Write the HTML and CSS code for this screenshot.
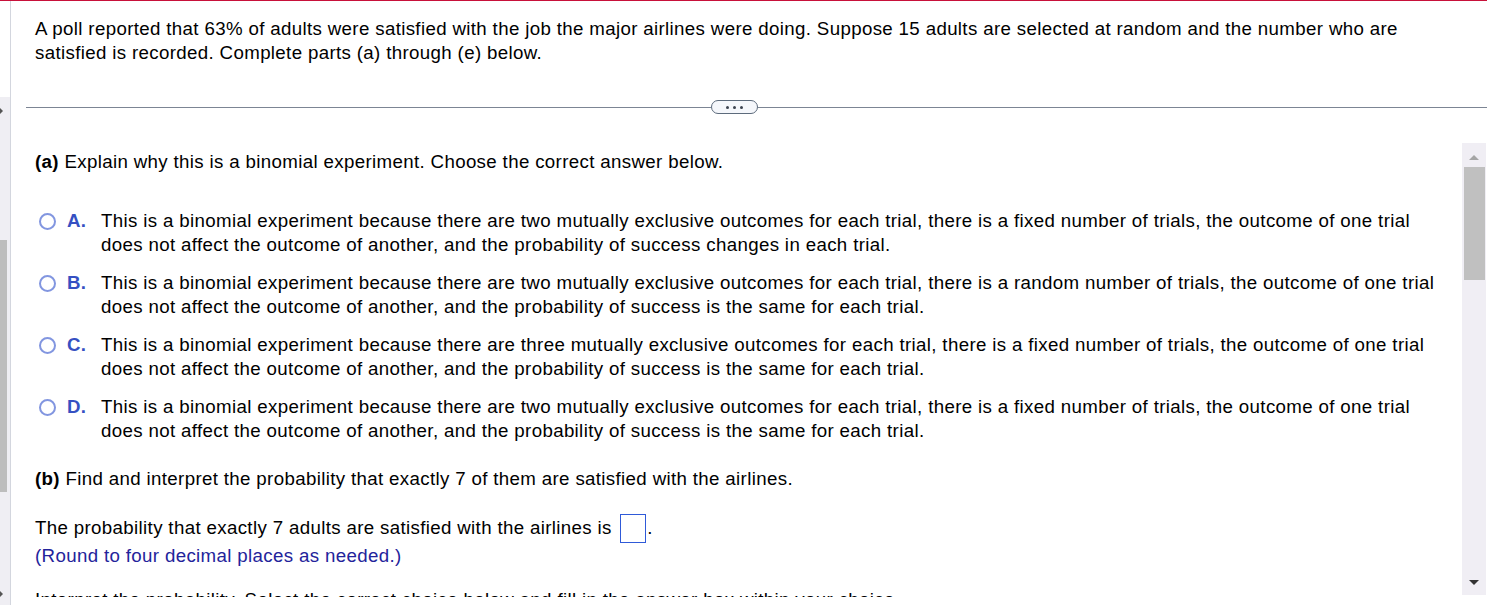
FILE: index.html
```html
<!DOCTYPE html>
<html>
<head>
<meta charset="utf-8">
<link rel="stylesheet" href="styles.css">
</head>
<body>
<div class="redline"></div>
<div class="page">
  <div class="leftbar">
    <div class="lb-top"></div>
    <div class="lb-track">
      <span class="lb-arrow"></span>
      <div class="lb-gap1"></div>
      <div class="lb-thumb"></div>
      <div class="lb-gap2"></div>
      <span class="lb-arrow lb-down"></span>
    </div>
  </div>
  <div class="main">
    <p class="stem">A poll reported that 63% of adults were satisfied with the job the major airlines were doing. Suppose 15 adults are selected at random and the number who are satisfied is recorded. Complete parts (a) through (e) below.</p>
    <div class="divider">
      <span class="line-left"></span>
      <span class="more"><i></i><i></i><i></i></span>
      <span class="line-right"></span>
    </div>
    <div class="pane">
      <div class="content">
        <p class="part"><b>(a)</b> Explain why this is a binomial experiment. Choose the correct answer below.</p>
        <div class="options">
          <div class="option"><span class="radio"></span><span class="letter">A.</span><span class="otext">This is a binomial experiment because there are two mutually exclusive outcomes for each trial, there is a fixed number of trials, the outcome of one trial does not affect the outcome of another, and the probability of success changes in each trial.</span></div>
          <div class="option"><span class="radio"></span><span class="letter">B.</span><span class="otext">This is a binomial experiment because there are two mutually exclusive outcomes for each trial, there is a random number of trials, the outcome of one trial does not affect the outcome of another, and the probability of success is the same for each trial.</span></div>
          <div class="option"><span class="radio"></span><span class="letter">C.</span><span class="otext">This is a binomial experiment because there are three mutually exclusive outcomes for each trial, there is a fixed number of trials, the outcome of one trial does not affect the outcome of another, and the probability of success is the same for each trial.</span></div>
          <div class="option"><span class="radio"></span><span class="letter">D.</span><span class="otext">This is a binomial experiment because there are two mutually exclusive outcomes for each trial, there is a fixed number of trials, the outcome of one trial does not affect the outcome of another, and the probability of success is the same for each trial.</span></div>
        </div>
        <p class="part partb"><b>(b)</b> Find and interpret the probability that exactly 7 of them are satisfied with the airlines.</p>
        <p class="answer">The probability that exactly 7 adults are satisfied with the airlines is <span class="box"></span>.</p>
        <p class="hint">(Round to four decimal places as needed.)</p>
        <p class="interp">Interpret the probability. Select the correct choice below and fill in the answer box within your choice.</p>
      </div>
      <div class="vscroll">
        <span class="vs-up"></span>
        <div class="vs-thumb"></div>
        <div class="vs-fill"></div>
        <span class="vs-down"></span>
      </div>
    </div>
  </div>
</div>
</body>
</html>
```
FILE: styles.css
```css
html, body {
  margin: 0;
  padding: 0;
  background: #ffffff;
  overflow: hidden;
}
body {
  width: 1487px;
  height: 605px;
  font-family: "Liberation Sans", Arial, sans-serif;
  font-size: 18.7px;
  letter-spacing: 0.35px;
  line-height: 24px;
  color: #000000;
}
p {
  margin: 0;
}
.redline {
  height: 1px;
  background: #c8113a;
}
.page {
  display: flex;
  height: 604px;
}
.leftbar {
  width: 10px;
  border-right: 1px solid #d3d6de;
  display: flex;
  flex-direction: column;
}
.lb-top {
  height: 96px;
  background: #ffffff;
}
.lb-track {
  flex: 1;
  background: #efeef3;
  display: flex;
  flex-direction: column;
  align-items: flex-start;
}
.lb-arrow {
  width: 0;
  height: 0;
  margin: 11px 0 0 0;
  border-left: 3px solid #555555;
  border-top: 3px solid transparent;
  border-bottom: 3px solid transparent;
}
.lb-down {
  margin: 0 0 8px 0;
}
.lb-gap1 {
  height: 126px;
}
.lb-thumb {
  width: 7px;
  height: 252px;
  background: #bdbdbd;
}
.lb-gap2 {
  flex: 1;
}
.main {
  flex: 1;
  display: flex;
  flex-direction: column;
  min-width: 0;
}
.stem {
  padding: 16px 30px 0 24px;
}
.divider {
  display: flex;
  align-items: center;
  margin: 35px 0 0 15px;
  height: 14px;
}
.line-left {
  width: 685px;
  border-top: 1px solid #7c8594;
}
.line-right {
  flex: 1;
  border-top: 1px solid #7c8594;
}
.more {
  box-sizing: border-box;
  width: 47px;
  height: 14px;
  border: 1px solid #5d6b7c;
  border-radius: 7px;
  background: #f5f7fb;
  display: flex;
  justify-content: center;
  align-items: center;
  gap: 4px;
}
.more i {
  width: 3px;
  height: 3px;
  border-radius: 50%;
  background: #3c4450;
}
.pane {
  display: flex;
  margin-top: 29px;
  height: 454px;
  overflow: hidden;
}
.content {
  flex: 1;
  padding: 7px 6px 0 24px;
  min-width: 0;
}
.part b {
  font-weight: bold;
}
.options {
  margin-top: 35px;
}
.option {
  display: flex;
  align-items: flex-start;
  margin-bottom: 14px;
}
.radio {
  box-sizing: border-box;
  flex: none;
  width: 17px;
  height: 17px;
  margin: 4px 11px 0 4px;
  border: 2px solid #8296e0;
  border-radius: 50%;
  background: #ffffff;
}
.letter {
  flex: none;
  width: 34px;
  font-weight: bold;
  color: #3550c2;
}
.otext {
  flex: 1;
}
.partb {
  margin-top: 24px;
}
.answer {
  margin-top: 25px;
  height: 28px;
}
.box {
  display: inline-block;
  box-sizing: border-box;
  width: 26px;
  height: 29px;
  border: 1px solid #2f5ad8;
  vertical-align: middle;
  margin: -4px 1px -4px 3px;
  position: relative;
  top: -1px;
}
.hint {
  color: #23239b;
}
.interp {
  margin-top: 20px;
}
.vscroll {
  flex: none;
  width: 24px;
  margin-right: 1px;
  height: 452px;
  background: #f0eef4;
  display: flex;
  flex-direction: column;
  align-items: center;
}
.vs-up {
  width: 0;
  height: 0;
  margin: 12px 0 7px 0;
  border-bottom: 5px solid #a5a5a5;
  border-left: 5px solid transparent;
  border-right: 5px solid transparent;
}
.vs-thumb {
  width: 21px;
  height: 113px;
  background: #c0c0c0;
}
.vs-fill {
  flex: 1;
}
.vs-down {
  width: 0;
  height: 0;
  margin: 0 0 10px 0;
  border-top: 5px solid #333333;
  border-left: 5px solid transparent;
  border-right: 5px solid transparent;
}
```
